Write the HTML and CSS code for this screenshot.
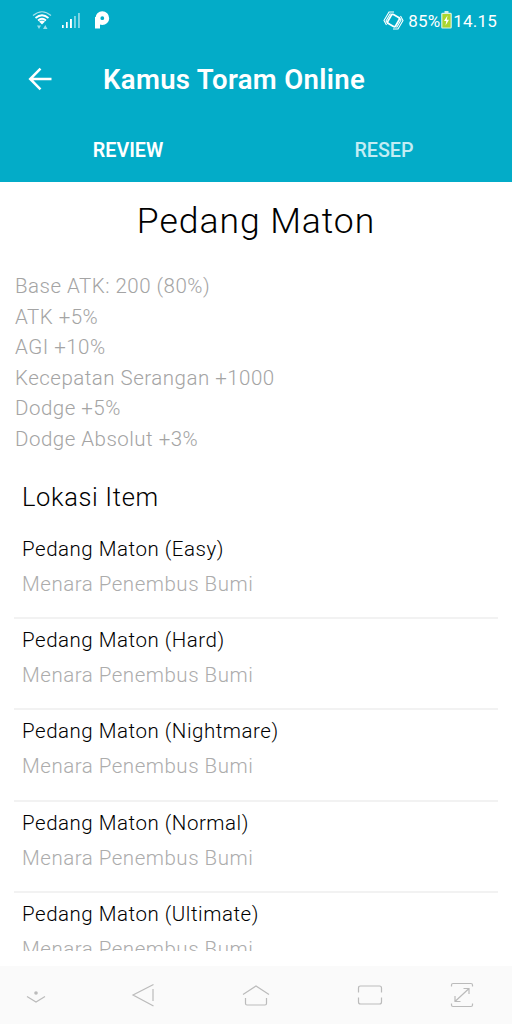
FILE: index.html
```html
<!DOCTYPE html>
<html lang="id">
<head>
    <meta charset="utf-8">
    <title>Kamus Toram Online</title>
    <link rel="stylesheet" href="styles.css">
</head>
<body>
<div class="screen">
    <header class="header">
        <div class="status">
            <svg class="wifi" width="20" height="20" viewBox="0 0 20 20" fill="none" stroke="#fff">
                <path d="M1 5.5Q10 -2 19 5.5" stroke-width="1.2" opacity=".65"/>
                <path d="M3.5 8Q10 2.5 16.5 8M6 10.5Q10 7 14 10.5" stroke-width="1.7"/>
                <path d="M7 11.5Q10 9.5 13 11.5L10 14.5Z" fill="#fff" stroke="none"/>
                <path d="M5 15.5h4l-2 3.5zM11 19h4.5l-2.2-4z" fill="#fff" stroke="none" opacity=".6"/>
            </svg>
            <svg class="signal" width="19" height="17" viewBox="0 0 19 17" fill="#fff">
                <rect x="0" y="13" width="1.7" height="3"/>
                <rect x="4" y="10" width="1.7" height="6"/>
                <rect x="8" y="7" width="1.9" height="9"/>
                <rect x="12" y="4" width="1.9" height="12" opacity=".5"/>
                <rect x="16" y="1" width="1.9" height="15" opacity=".5"/>
            </svg>
            <svg class="app" width="16" height="18" viewBox="0 0 16 18" fill="none" stroke="#fff" stroke-width="5">
                <circle cx="8.3" cy="7.2" r="4.4"/>
                <path d="M3.5 6v11.5"/>
            </svg>
            <svg class="rotate" width="21" height="19" viewBox="0 0 21 19" fill="none" stroke="#fff">
                <rect x="6" y="4.4" width="9" height="10.2" rx="1.5" transform="rotate(30 10.5 9.5)" stroke-width="1.8"/>
                <path d="M11 1H6L1 9.5L3.5 14M8.5 3H7L3 10L5 13M10 18h5l5-8.5L17.5 5M12.5 16H14l4-7L16 6" stroke-width="1.1"/>
            </svg>
            <span class="percent">85%</span>
            <svg class="battery" width="11" height="18" viewBox="0 0 11 18">
                <path d="M3.5 1h4" stroke="#e8f8ee" stroke-width="1.8"/>
                <rect x=".8" y="2.4" width="9.4" height="14.6" rx=".8" fill="#aad62f" stroke="#d8f2e5" stroke-width="1.2"/>
                <path d="M6.5 4.5L3 10h2.3L4.5 14.5L8 8.7H5.8z" fill="#fff"/>
            </svg>
            <span class="clock">14.15</span>
        </div>
        <div class="toolbar">
            <svg class="back" width="24" height="24" viewBox="0 0 24 24" fill="none" stroke="#fff" stroke-width="2.5">
                <path d="M23.5 12H2.5M12.5 1.7L2.2 12L12.5 22.3"/>
            </svg>
            <h1>Kamus Toram Online</h1>
        </div>
        <nav class="tabs">
            <a class="active">REVIEW</a>
            <a>RESEP</a>
        </nav>
    </header>
    <main class="content">
        <h2>Pedang Maton</h2>
        <ul class="stats">
            <li>Base ATK: 200 (80%)</li>
            <li>ATK +5%</li>
            <li>AGI +10%</li>
            <li>Kecepatan Serangan +1000</li>
            <li>Dodge +5%</li>
            <li>Dodge Absolut +3%</li>
        </ul>
        <h3>Lokasi Item</h3>
        <ul class="locations">
            <li><b>Pedang Maton (Easy)</b><span>Menara Penembus Bumi</span></li>
            <li><b>Pedang Maton (Hard)</b><span>Menara Penembus Bumi</span></li>
            <li><b>Pedang Maton (Nightmare)</b><span>Menara Penembus Bumi</span></li>
            <li><b>Pedang Maton (Normal)</b><span>Menara Penembus Bumi</span></li>
            <li><b>Pedang Maton (Ultimate)</b><span>Menara Penembus Bumi</span></li>
        </ul>
    </main>
    <footer class="navbar">
        <svg width="20" height="24" viewBox="0 0 20 24"><path d="M1 13.5L10 19L19 13.5"/><circle cx="10" cy="10" r="1.8" fill="#bbb" stroke="none"/></svg>
        <svg width="24" height="24" viewBox="0 0 24 24"><path d="M22.5 1.5L2 12L22.5 23M22 6v12"/></svg>
        <svg width="28" height="24" viewBox="0 0 28 24"><path d="M1 11.5L14 3L27 11.5M3.5 15v5.5q0 1.5 1.5 1.5h18q1.5 0 1.5-1.5V15"/></svg>
        <svg width="26" height="24" viewBox="0 0 26 24"><path d="M1.5 9.5V5q0-2 2-2h19q2 0 2 2v4.5M1.5 14.5V19q0 2 2 2h19q2 0 2-2v-4.5"/></svg>
        <svg width="24" height="26" viewBox="0 0 24 26"><path d="M1.5 4.5V3q0-1.5 1.5-1.5h18q1.5 0 1.5 1.5v1.5M1.5 21.5V23q0 1.5 1.5 1.5h18q1.5 0 1.5-1.5v-1.5M5 19.5L19 6.5M13.5 6.5H19V12M5 14v5.5h5.5"/></svg>
    </footer>
</div>
</body>
</html>
```
FILE: styles.css
```css
body {
    margin: 0;
    font-family: Roboto, "Liberation Sans", sans-serif;
    background: #fff;
}
h1, h2, h3, ul {
    margin: 0;
    padding: 0;
}
li {
    list-style: none;
}
.screen {
    display: flex;
    flex-direction: column;
    height: 1024px;
    overflow: hidden;
}

/* header */
.header {
    flex: none;
    height: 182px;
    background: #03acc8;
    color: #fff;
}
.status {
    display: flex;
    align-items: center;
    height: 40px;
    padding: 0 15px 0 32px;
    font-size: 17px;
    letter-spacing: .2px;
}
.signal { margin-left: 10px; }
.app { margin-left: 13px; }
.rotate { margin-left: auto; }
.percent { margin: 2px 0 0 4px; }
.battery { margin: 0 1px; }
.clock { margin-top: 2px; }
.toolbar {
    display: flex;
    align-items: center;
    height: 78px;
    padding-left: 28px;
}
.toolbar h1 {
    margin-left: 51px;
    font-size: 27.5px;
    font-weight: 600;
    letter-spacing: .35px;
}
.tabs {
    display: flex;
    height: 64px;
}
.tabs a {
    flex: 1;
    line-height: 65px;
    text-align: center;
    font-size: 19.7px;
    font-weight: 500;
    color: #c3edf4;
}
.tabs .active {
    font-weight: 600;
    color: #fff;
}

/* item */
.content {
    height: 769px;
    overflow: hidden;
    font-weight: 300;
}
.content h2 {
    height: 89px;
    line-height: 79px;
    text-align: center;
    font-size: 35.5px;
    font-weight: 300;
    letter-spacing: .95px;
    color: #000;
}
.stats {
    padding-left: 15px;
    font-size: 20.5px;
    line-height: 30.5px;
    letter-spacing: .49px;
    color: #a4a4a4;
}
.content h3 {
    padding: 23px 0 0 22px;
    line-height: 40px;
    font-size: 25.5px;
    font-weight: 300;
    letter-spacing: .65px;
    color: #000;
}
.locations {
    margin: 11px 14px 0;
}
.locations li {
    height: 89.2px;
    padding: 0 8px;
    border-bottom: 2px solid #f2f2f2;
    font-size: 20.5px;
    letter-spacing: .52px;
}
.locations b {
    display: block;
    padding-top: 1px;
    line-height: 40px;
    font-weight: 300;
    color: #000;
}
.locations span {
    display: block;
    line-height: 30px;
    color: #acacac;
}

/* system buttons */
.navbar {
    display: flex;
    align-items: center;
    gap: 87px;
    height: 58px;
    margin-top: auto;
    padding-left: 26px;
    background: #fafafa;
}
.navbar svg {
    fill: none;
    stroke: #bbb;
    stroke-width: 1.2;
}
.navbar svg:first-child { margin-right: -2px; }
.navbar svg:last-child { margin-left: -20px; }
```
